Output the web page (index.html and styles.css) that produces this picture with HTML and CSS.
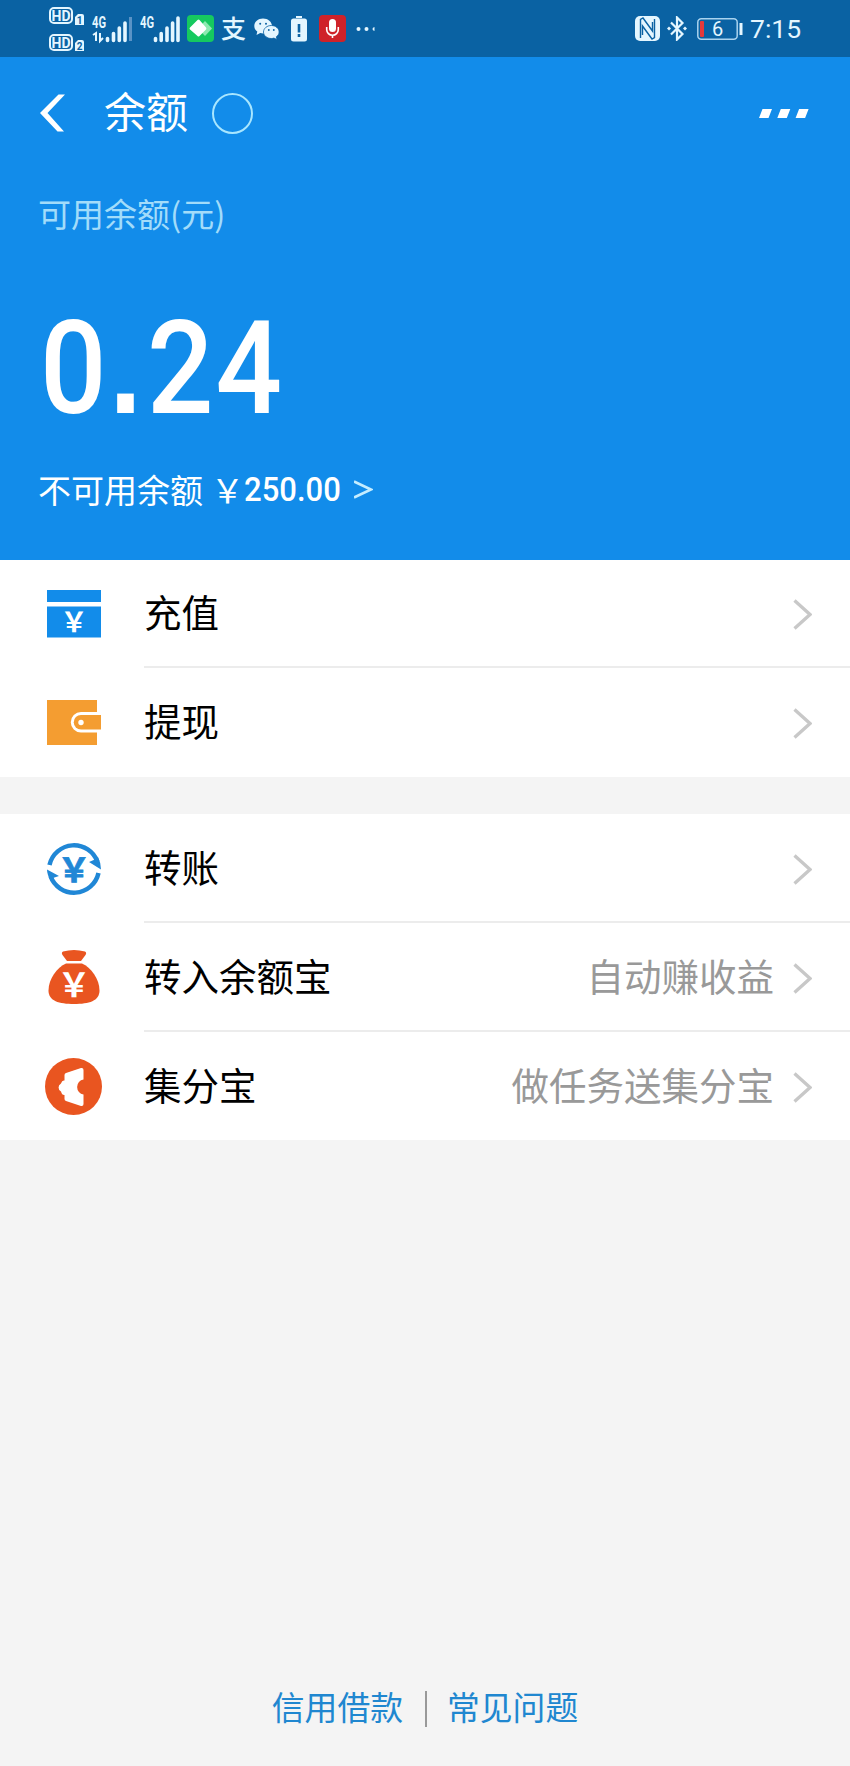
FILE: index.html
```html
<!DOCTYPE html>
<html lang="zh-CN">
<head>
  <meta charset="UTF-8">
  <meta name="viewport" content="width=device-width, initial-scale=1.0">
  <title>余额</title>
  <link rel="stylesheet" href="styles.css">
</head>
<body>
  <!-- 状态栏 -->
  <div class="status-bar">
    <svg class="icon-sim" width="36" height="46" viewBox="0 0 36 46">
      <rect x="1" y="2" width="22" height="15" rx="4" fill="none" stroke="#e4f6ff" stroke-width="2"/>
      <text x="12" y="14.500" font-size="14" font-weight="700" text-anchor="middle">HD</text>
      <path d="M26 11l3-3h4q2 0 2 2v9h-9z" fill="#e4f6ff"/>
      <text class="sim-no" x="30.500" y="17.500" font-size="10" font-weight="700" text-anchor="middle">1</text>
      <rect x="1" y="29" width="22" height="15" rx="4" fill="none" stroke="#e4f6ff" stroke-width="2"/>
      <text x="12" y="41.500" font-size="14" font-weight="700" text-anchor="middle">HD</text>
      <path d="M26 37l3-3h4q2 0 2 2v9h-9z" fill="#e4f6ff"/>
      <text class="sim-no" x="30.500" y="43.500" font-size="10" font-weight="700" text-anchor="middle">2</text>
    </svg>
    <svg class="icon-signal" width="40" height="38" viewBox="0 -6 40 38">
      <text x="0" y="12" font-size="16" font-weight="700" textLength="14" lengthAdjust="spacingAndGlyphs">4G</text>
      <path d="M1 19l3-2v8M8 17v8l3-3" fill="none" stroke="#e4f6ff" stroke-width="2"/>
      <path d="M15.500 22.500v2M21.500 17.500v7M27.300 12v12.500M33 7v17.500" stroke="#e4f6ff" stroke-width="3.600" stroke-linecap="round"/>
      <path d="M38.500 1v24" stroke="#5a93c6" stroke-width="3"/>
    </svg>
    <svg class="icon-signal second" width="40" height="38" viewBox="0 -6 40 38">
      <text x="0" y="12" font-size="16" font-weight="700" textLength="14" lengthAdjust="spacingAndGlyphs">4G</text>
      <path d="M15.500 22.500v2M21.200 17.500v7M27 12v12.500M32.600 7v17.500M38 2v22.500" stroke="#e4f6ff" stroke-width="3.600" stroke-linecap="round"/>
    </svg>
    <svg class="icon-app" width="27" height="27" viewBox="0 0 27 27">
      <rect width="27" height="27" rx="4" fill="#16c95f"/>
      <path d="M18 6l7 7.500-7 7.500-7-7.500z" fill="#8deab0"/>
      <path d="M10.500 5q1-.8 2 0l6.500 7.500q.8 1 0 2L12.500 21q-1 1-2 0L3 14.500q-1-1 0-2z" fill="#fff"/>
    </svg>
    <span class="status-zhi">支</span>
    <svg class="icon-wechat" width="26" height="22" viewBox="0 0 26 22">
      <path d="M9 .5C4 .5.300 3.800.300 8c0 2.400 1.200 4.300 3 5.600L2.500 17l3.700-1.900c1 .3 2 .4 3 .4C14 15.500 18 12 18 8S14 .5 9 .5z" fill="#e4f6ff"/>
      <path d="M17.300 7.500c-4.300 0-7.800 2.900-7.800 6.500s3.500 6.500 7.800 6.500c.9 0 1.800-.1 2.600-.4L23 21.500l-.700-2.700c1.700-1.200 2.800-2.900 2.800-4.800 0-3.600-3.500-6.500-7.800-6.500z" fill="#e4f6ff" stroke="#0a62a3" stroke-width=".8"/>
      <g fill="#0a62a3"><circle cx="6.200" cy="5.700" r="1"/><circle cx="12" cy="5.700" r="1"/><circle cx="14.800" cy="12" r=".9"/><circle cx="19.800" cy="12" r=".9"/></g>
    </svg>
    <svg class="icon-low" width="16" height="26" viewBox="0 0 16 26">
      <path d="M5 0h6v2H5zM2.500 2.500h11q2.500 0 2.500 2.500v18q0 2.500-2.500 2.500h-11Q0 25.500 0 23V5q0-2.500 2.500-2.500z" fill="#e4f6ff"/>
      <path d="M8 8v8.500M8 18v3" stroke="#0a62a3" stroke-width="2.600"/>
    </svg>
    <svg class="icon-mic" width="27" height="27" viewBox="0 0 27 27">
      <rect width="27" height="27" rx="4" fill="#cf2229"/>
      <rect x="10" y="4" width="7" height="13" rx="3.500" fill="#fff"/>
      <path d="M7.700 12v2.500a5.800 5.800 0 0 0 11.600 0V12M13.500 20v3" fill="none" stroke="#fff" stroke-width="1.600"/>
    </svg>
    <svg class="icon-more" width="20" height="6" viewBox="0 0 20 6" fill="#e4f6ff">
      <circle cx="2.500" cy="3" r="2"/><circle cx="10.500" cy="3" r="2"/><path d="M18.500 1v4q-2-.5-2-2t2-2z"/>
    </svg>
    <svg class="icon-nfc" width="25" height="25" viewBox="0 0 25 25">
      <rect width="25" height="25" rx="5" fill="#e4f6ff"/>
      <path d="M5.500 22V3.500L8 2l9.500 13V6M19.500 3v18.500L17 23 7.500 10v9" fill="none" stroke="#0a62a3" stroke-width="1.400"/>
    </svg>
    <svg class="icon-bt" width="20" height="25" viewBox="0 0 20 25">
      <path d="M4 6.500l11.500 11.500-5.500 5.500V1.500L15.500 7 4 18.500" fill="none" stroke="#e4f6ff" stroke-width="2.200"/>
      <path d="M0 12.500l2-2 2 2-2 2zM16 12.500l2-2 2 2-2 2z" fill="#e4f6ff"/>
    </svg>
    <svg class="icon-battery" width="46" height="22" viewBox="0 0 46 22">
      <rect x=".8" y=".8" width="39.400" height="20.400" rx="3.500" fill="none" stroke="#a9d3ef" stroke-width="1.500"/>
      <rect x="3" y="3" width="4" height="16" rx="1" fill="#e5393b"/>
      <path d="M44 5v12" stroke="#e4f6ff" stroke-width="3"/>
      <text x="20.500" y="18" font-size="20" text-anchor="middle">6</text>
    </svg>
    <span class="status-time">7:15</span>
  </div>

  <!-- 余额头部 -->
  <header class="balance">
    <div class="nav">
      <svg class="nav-back" width="26" height="38" viewBox="0 0 26 38">
        <path d="M18.500 0.500H25L7.500 19 24 37.500h-6.500L0 19z" fill="#fff"/>
      </svg>
      <h1 class="nav-title">余额</h1>
      <span class="nav-circle"></span>
      <svg class="nav-more" width="51" height="9" viewBox="0 0 51 9" fill="#fff">
        <path d="M3.500 0H13L9.500 9H0zM21.800 0h9.500l-3.500 9h-9.500zM40.100 0h9.500l-3.500 9h-9.500z"/>
      </svg>
    </div>
    <p class="balance-label">可用余额(元)</p>
    <p class="balance-amount">0<span class="dot">.</span>24</p>
    <p class="frozen">不可用余额<span class="frozen-sign">￥</span><span class="frozen-amount">250.00</span>
      <svg class="frozen-arrow" width="19" height="19" viewBox="0 0 19 19"><path d="M0 1.500l17 8-17 8" fill="none" stroke="#c5edff" stroke-width="2.600"/></svg>
    </p>
  </header>

  <!-- 功能列表 -->
  <ul class="list">
    <li class="item">
      <svg class="item-icon" width="58" height="58" viewBox="0 0 58 58">
        <path d="M2 5h54v12H2zM2 21.500h54v31H2z" fill="#128cea"/>
        <text class="yen" x="29" y="47" font-size="27" fill="#fff">￥</text>
      </svg>
      <div class="item-body">
        <span class="item-name">充值</span>
        <svg class="item-arrow" width="19" height="31" viewBox="0 0 19 31"><path d="M1.500 1.500L17 15.500l-15.500 14"/></svg>
      </div>
    </li>
    <li class="item">
      <svg class="item-icon" width="58" height="58" viewBox="0 0 58 58">
        <path d="M2 6h50v12H36a10 10 0 0 0 0 20.500h16V51H2z" fill="#f49d31"/>
        <path d="M56 21v14.500H36a7.250 7.250 0 0 1 0-14.500z" fill="#f49d31"/>
        <circle cx="36" cy="28.500" r="2.700" fill="#fff"/>
      </svg>
      <div class="item-body">
        <span class="item-name">提现</span>
        <svg class="item-arrow" width="19" height="31" viewBox="0 0 19 31"><path d="M1.500 1.500L17 15.500l-15.500 14"/></svg>
      </div>
    </li>
  </ul>

  <ul class="list second">
    <li class="item">
      <svg class="item-icon" width="58" height="58" viewBox="0 0 58 58">
        <path d="M4.500 25a25 25 0 0 1 48-3M53.500 33a25 25 0 0 1-48 3" fill="none" stroke="#2087d6" stroke-width="4.500"/>
        <path d="M44 22l7-3 2-2q3 6 3 12.500zM2 29.500l12 6.500-6 2-2 3Q2 35 2 29.500z" fill="#2087d6"/>
        <text class="yen heavy" x="29" y="41.500" font-size="33" fill="#2087d6" stroke="#2087d6">￥</text>
      </svg>
      <div class="item-body">
        <span class="item-name">转账</span>
        <svg class="item-arrow" width="19" height="31" viewBox="0 0 19 31"><path d="M1.500 1.500L17 15.500l-15.500 14"/></svg>
      </div>
    </li>
    <li class="item">
      <svg class="item-icon" width="58" height="58" viewBox="0 0 58 58">
        <path d="M18 2.500Q29-.5 40 2.500q2 1 .5 3.500L36 12H22l-4.500-6q-1.500-2.500.5-3.500z" fill="#e95520"/>
        <path d="M21 14.500h16C46 18.500 54.500 30 54.500 41.500 54.500 52 44 55 29 55S3.500 52 3.500 41.500C3.500 30 12 18.500 21 14.500z" fill="#e95520"/>
        <text class="yen" x="29" y="48" font-size="33" fill="#fff">￥</text>
      </svg>
      <div class="item-body">
        <span class="item-name">转入余额宝</span>
        <span class="item-tip">自动赚收益</span>
        <svg class="item-arrow" width="19" height="31" viewBox="0 0 19 31"><path d="M1.500 1.500L17 15.500l-15.500 14"/></svg>
      </div>
    </li>
    <li class="item">
      <svg class="item-icon" width="58" height="58" viewBox="0 0 58 58">
        <circle cx="28.500" cy="28.500" r="28.500" fill="#e95520"/>
        <path d="M21 15l15-5q2.500-.5 2.500 2v9.500a7.600 7.600 0 0 0 0 15V46q0 2.500-2.500 2l-15-5q-1.500-.5-1.500-2v-4q-2.500.3-3.500-3.500a4.500 4.500 0 0 1 0-8q1-3.500 3.500-3v-5.500q0-1.500 1.500-2z" fill="#fff"/>
      </svg>
      <div class="item-body">
        <span class="item-name">集分宝</span>
        <span class="item-tip">做任务送集分宝</span>
        <svg class="item-arrow" width="19" height="31" viewBox="0 0 19 31"><path d="M1.500 1.500L17 15.500l-15.500 14"/></svg>
      </div>
    </li>
  </ul>

  <!-- 底部链接 -->
  <footer class="footer">
    <a class="footer-link">信用借款</a>
    <span class="footer-line"></span>
    <a class="footer-link">常见问题</a>
  </footer>
</body>
</html>
```
FILE: styles.css
```css
* {
  box-sizing: border-box;
  margin: 0;
  padding: 0;
}

body {
  display: flex;
  flex-direction: column;
  height: 1766px;
  background-color: #f4f4f4;
  font-family: "Noto Sans CJK SC", sans-serif;
  color: #000;
}

svg {
  display: block;
  flex: none;
}

/* 状态栏 */
.status-bar {
  display: flex;
  align-items: center;
  height: 57px;
  padding: 0 48px 0 49px;
  background-color: #0a62a3;
  color: #e4f6ff;
  font-family: Roboto, sans-serif;
}

.status-bar text {
  fill: #e4f6ff;
}

.status-bar .sim-no {
  fill: #0a62a3;
}

.icon-signal {
  margin-left: 7px;
}

.icon-signal.second {
  margin-left: 8px;
}

.icon-app {
  margin-left: 7px;
}

.status-zhi {
  width: 26px;
  margin-left: 7px;
  padding-bottom: 3px;
  font-family: "Noto Sans CJK SC", sans-serif;
  font-size: 25px;
  font-weight: 500;
  line-height: 30px;
}

.icon-wechat {
  margin-left: 7px;
}

.icon-low {
  margin-left: 11px;
}

.icon-mic {
  margin-left: 12px;
}

.icon-more {
  margin-left: 10px;
}

.icon-nfc {
  margin-left: auto;
}

.icon-bt {
  margin-left: 7px;
}

.icon-battery {
  margin-left: 10px;
}

.status-time {
  width: 52px;
  margin-left: 7px;
  font-size: 26.500px;
  line-height: 30px;
  white-space: nowrap;
}

/* 余额头部 */
.balance {
  height: 502.500px;
  padding: 0 40px;
  background-color: #128cea;
  color: #fff;
}

.nav {
  display: flex;
  align-items: center;
  height: 112px;
}

.nav-title {
  margin-left: 38px;
  padding-bottom: 6px;
  font-size: 42px;
  font-weight: 400;
  line-height: 60px;
}

.nav-circle {
  width: 41px;
  height: 41px;
  margin-left: 24px;
  border: 2px solid #a8e6ff;
  border-radius: 50%;
}

.nav-more {
  margin-left: auto;
}

.balance-label {
  margin-top: 19px;
  margin-left: -2px;
  color: #a2dcfa;
  font-size: 33px;
  line-height: 50px;
}

.balance-amount {
  margin-top: 56px;
  font-family: Roboto, sans-serif;
  font-size: 130px;
  font-weight: 500;
  line-height: 150px;
  letter-spacing: 2px;
  transform: scaleX(0.9);
  transform-origin: left;
}

.dot {
  margin: 0 4px 0 1px;
  font-family: "Liberation Sans", sans-serif;
  font-weight: 700;
  line-height: 1;
}

.frozen {
  display: flex;
  align-items: center;
  margin-top: 19px;
  margin-left: -2px;
  font-size: 33px;
  line-height: 50px;
}

.frozen-sign {
  margin-left: 8px;
}

.frozen-amount {
  width: 98px;
  padding-top: 2px;
  font-family: Roboto, sans-serif;
  font-weight: 500;
  transform: scaleX(0.94);
  transform-origin: left;
}

.frozen-arrow {
  margin-left: 12px;
}

/* 功能列表 */
.list {
  list-style: none;
  background-color: #fff;
}

.list.second {
  margin-top: 37px;
}

.item {
  display: flex;
  align-items: center;
  height: 108.800px;
  padding-left: 45px;
}

.item-icon {
  margin-top: 1px;
}

.item-body {
  display: flex;
  flex: 1;
  align-items: center;
  height: 100%;
  margin-left: 41px;
  padding-right: 38px;
  border-bottom: 2px solid #ececec;
}

.item:last-child .item-body {
  border-bottom-color: transparent;
}

.item-name,
.item-tip {
  padding-bottom: 3px;
  font-size: 37.500px;
  line-height: 54px;
}

.item-tip {
  margin-left: auto;
  color: #999;
}

.item-arrow {
  margin-top: 4px;
  margin-left: auto;
  fill: none;
  stroke: #c8c8c8;
  stroke-width: 3.300px;
}

.item-tip + .item-arrow {
  margin-left: 19px;
}

.yen {
  font-family: "Noto Sans CJK SC", sans-serif;
  font-weight: 700;
  text-anchor: middle;
}

.yen.heavy {
  stroke-width: 0.8px;
}

/* 底部链接 */
.footer {
  display: flex;
  justify-content: center;
  align-items: center;
  margin-top: auto;
  padding-bottom: 31px;
}

.footer-link {
  padding-bottom: 5px;
  color: #2087d0;
  font-size: 32.800px;
  line-height: 48px;
}

.footer-line {
  width: 2px;
  height: 36px;
  margin: 0 20px 0 22px;
  background-color: #999;
}
```
